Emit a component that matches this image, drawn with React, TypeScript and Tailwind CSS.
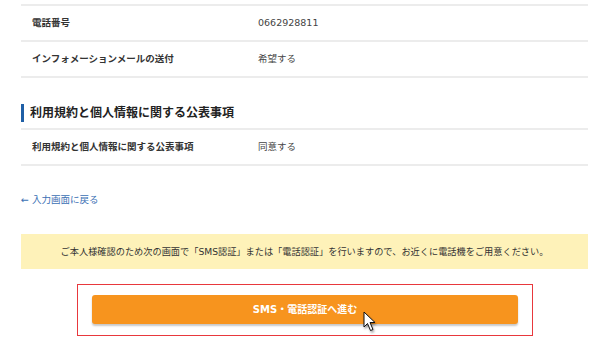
import React from 'react';

const font = { fontFamily: '"DejaVu Sans", "Noto Sans CJK JP", sans-serif' };

const rows = [
  { label: '電話番号', value: '0662928811' },
  { label: 'インフォメーションメールの送付', value: '希望する' },
];

const Row: React.FC<{ label: string; value: string; first?: boolean }> = ({ label, value, first }) => (
  <div
    className={`flex items-center border-b-2 border-[#ececec] ${first ? 'h-[38px] border-t-2' : 'h-[36px]'}`}
  >
    <div className="w-[237px] pl-[11px] text-[9.5px] font-bold text-[#333]">{label}</div>
    <div className="text-[9.5px] text-[#444]">{value}</div>
  </div>
);

const Cursor: React.FC = () => (
  <svg
    className="absolute left-[285px] top-[26px] drop-shadow-[1px_2px_1px_rgba(0,0,0,0.35)]"
    width="14"
    height="21"
    viewBox="0 0 14 21"
  >
    <path
      d="M1 1 L1 16 L4.5 12.5 L7.5 19.5 L10 18.5 L7 11.5 L12 11.5 Z"
      fill="#fff"
      stroke="#111"
      strokeWidth="1"
      strokeLinejoin="round"
    />
  </svg>
);

const App: React.FC = () => {
  return (
    <div className="w-[600px] h-[349px] bg-white overflow-hidden" style={font}>
      <div className="ml-[21px] w-[567px] pt-[4px]">
        {/* Contact rows */}
        {rows.map((r, i) => (
          <Row key={r.label} label={r.label} value={r.value} first={i === 0} />
        ))}

        {/* Terms section */}
        <div className="mt-[26px] mb-[6px] h-[18px] flex items-center border-l-[3px] border-[#1f5fa6] pl-[6px]">
          <h2 className="text-[12px] font-bold text-[#222] leading-none">
            利用規約と個人情報に関する公表事項
          </h2>
        </div>
        <Row label="利用規約と個人情報に関する公表事項" value="同意する" first />

        {/* Back link */}
        <div className="mt-[28px] h-[12px] flex items-center">
          <a href="#" className="text-[9.5px] text-[#3b70b4] leading-none">
            ← 入力画面に戻る
          </a>
        </div>

        {/* Notice */}
        <div className="mt-[28px] h-[35px] bg-[#fef2b9] flex items-center justify-center">
          <p className="text-[9.2px] text-[#333]">
            ご本人様確認のため次の画面で「SMS認証」または「電話認証」を行いますので、お近くに電話機をご用意ください。
          </p>
        </div>

        {/* Submit */}
        <div className="relative mt-[15px] ml-[56px] w-[456px] h-[52px] border border-[#e8383d] pt-[10px] pl-[14px]">
          <button className="w-[426px] h-[29px] rounded-[3px] bg-[#f7941e] text-white text-[10px] font-bold shadow-[0_2px_2px_rgba(0,0,0,0.22)]">
            SMS・電話認証へ進む
          </button>
          <Cursor />
        </div>
      </div>
    </div>
  );
};

export default App;
